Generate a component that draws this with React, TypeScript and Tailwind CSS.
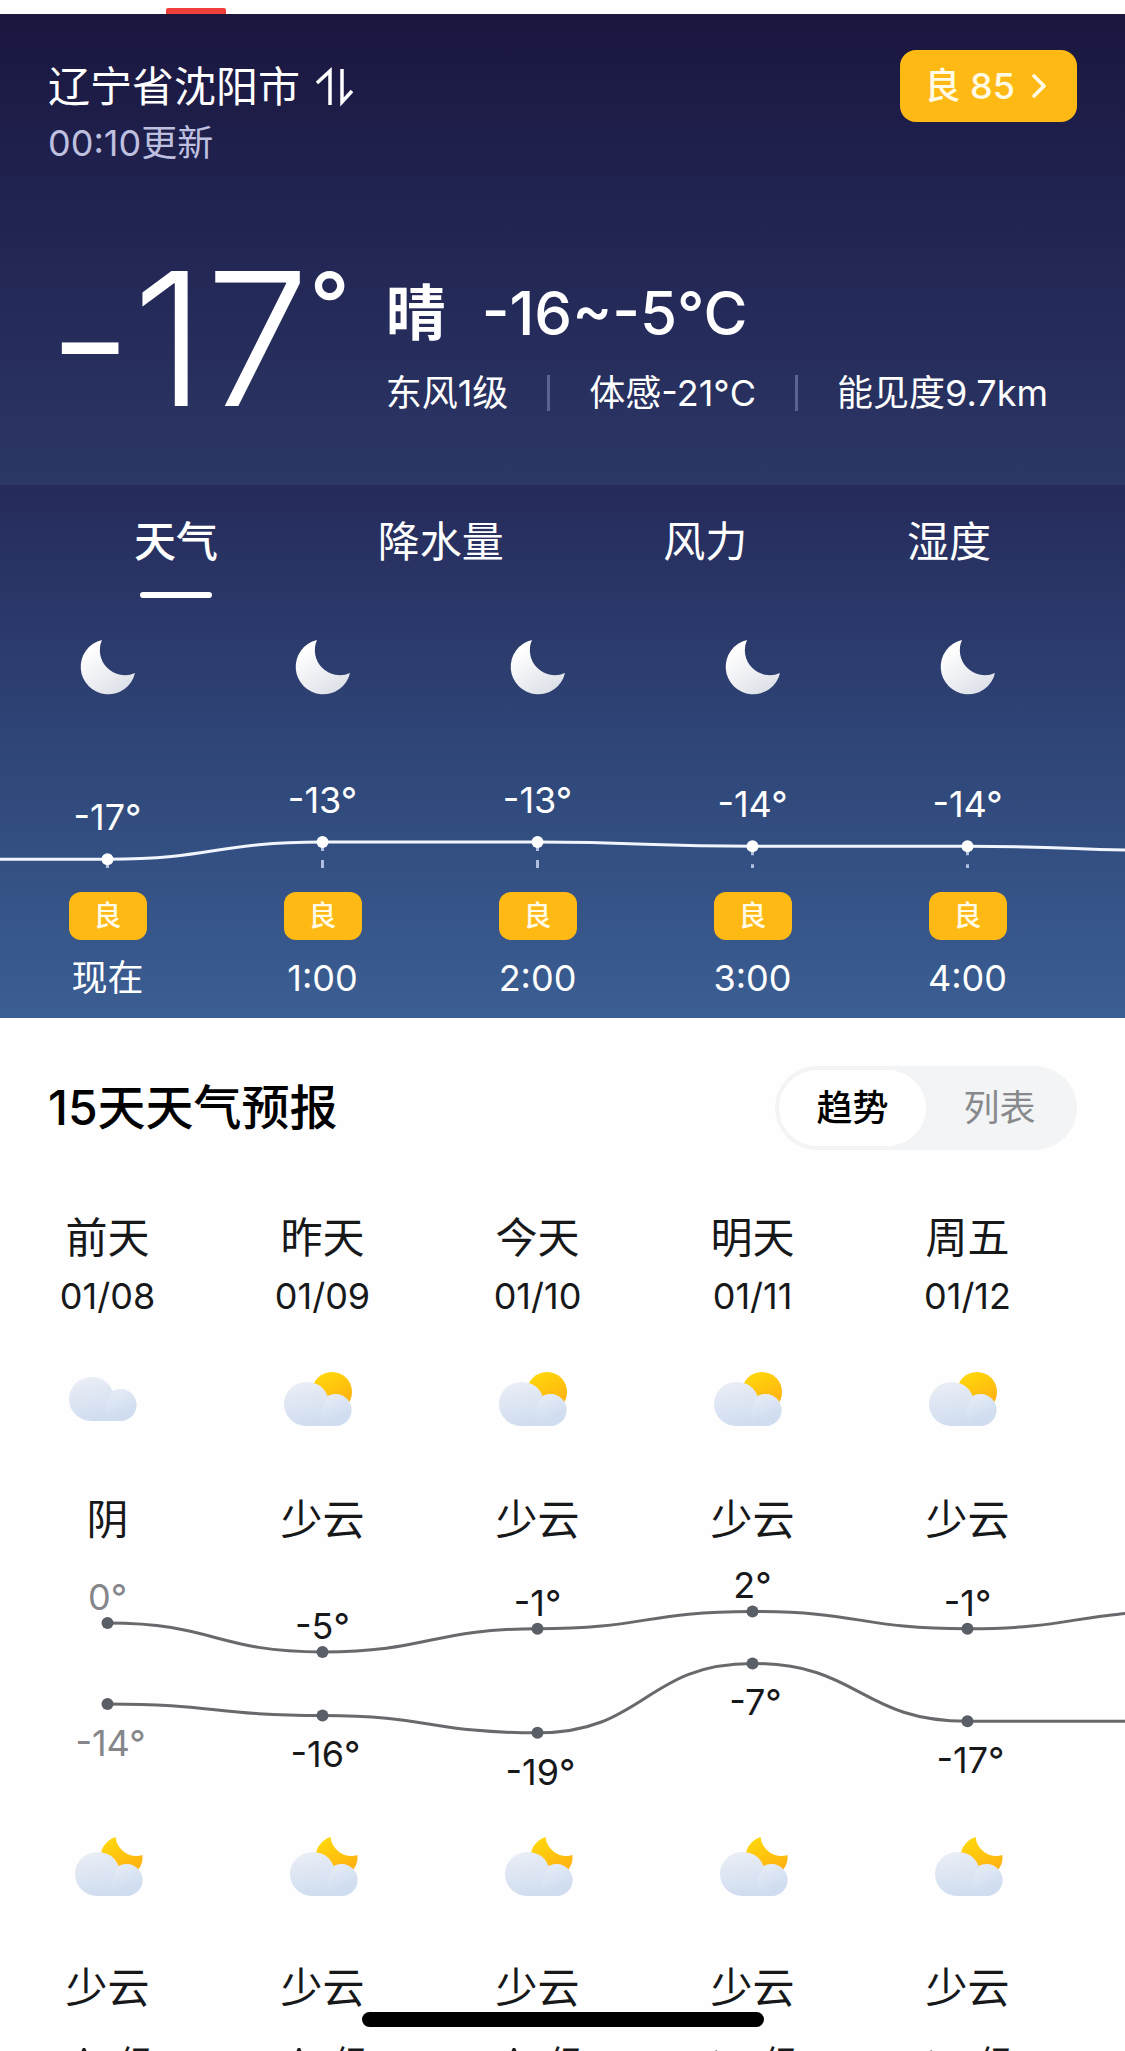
/**
 * Weather Page
 * Current conditions, hourly trend and the 15 day forecast
 */
import React, { useState } from 'react';
import { ChevronRight } from 'lucide-react';

type Icon = 'cloudy' | 'partly' | 'night';

const COL = 215;

const TABS = ['天气', '降水量', '风力', '湿度'];
const MODES = ['趋势', '列表'];

const HOURS = [
  { time: '现在', temp: -17 },
  { time: '1:00', temp: -13 },
  { time: '2:00', temp: -13 },
  { time: '3:00', temp: -14 },
  { time: '4:00', temp: -14 },
];

const DAYS: { name: string; date: string; icon: Icon; text: string; night: string; high: number; low: number; wind: number }[] = [
  { name: '前天', date: '01/08', icon: 'cloudy', text: '阴', night: '少云', high: 0, low: -14, wind: 0 },
  { name: '昨天', date: '01/09', icon: 'partly', text: '少云', night: '少云', high: -5, low: -16, wind: 0 },
  { name: '今天', date: '01/10', icon: 'partly', text: '少云', night: '少云', high: -1, low: -19, wind: 0 },
  { name: '明天', date: '01/11', icon: 'partly', text: '少云', night: '少云', high: 2, low: -7, wind: 90 },
  { name: '周五', date: '01/12', icon: 'partly', text: '少云', night: '少云', high: -1, low: -17, wind: 90 },
];

// Values of the next column, only used to carry the lines off the edge
const NEXT_HOUR = -15;
const NEXT_HIGH = 2;
const NEXT_LOW = -17;

const centerX = (i: number) => COL * i + COL / 2;
const hourY = (temp: number) => 148 + (-13 - temp) * 4.3;
const dayY = (temp: number) => 79 - temp * 5.78;

// Smooth line with a flat tangent at every point
const smoothPath = (ys: number[]) =>
  ys
    .map((y, i) => {
      if (i === 0) return `M${centerX(0)} ${y}`;
      const mid = COL * i;
      return `C${mid} ${ys[i - 1]} ${mid} ${y} ${centerX(i)} ${y}`;
    })
    .join('');

const Gradients: React.FC = () => (
  <svg className="absolute h-0 w-0" aria-hidden="true">
    <defs>
      <linearGradient id="moon" x1="0" y1="0" x2="0.7" y2="1">
        <stop offset="0.2" stopColor="#ffffff" />
        <stop offset="1" stopColor="#dde0e8" />
      </linearGradient>
      <linearGradient id="sun" x1="0.2" y1="0" x2="0.7" y2="1">
        <stop offset="0" stopColor="#ffd90a" />
        <stop offset="1" stopColor="#ffac12" />
      </linearGradient>
      <linearGradient id="cloud" x1="0" y1="0" x2="0.3" y2="1">
        <stop offset="0" stopColor="#eceff6" />
        <stop offset="1" stopColor="#d0ddf0" />
      </linearGradient>
      <linearGradient id="puff" x1="0" y1="0" x2="0.5" y2="1">
        <stop offset="0" stopColor="#f2f5fb" />
        <stop offset="0.8" stopColor="#d0ddf0" />
      </linearGradient>
    </defs>
  </svg>
);

const Cloud: React.FC<{ x: number; y: number }> = ({ x, y }) => (
  <g transform={`translate(${x} ${y})`}>
    <path d="M25 28A22 22 0 1 0 25 72H54.500A16 16 0 0 0 54.500 40Q50 40 46.500 42Q41 28 25 28Z" fill="url(#cloud)" />
    <path d="M46 72A16 16 0 0 1 43 50Q46 40 54.500 40A16 16 0 0 1 54.500 72Z" fill="url(#puff)" opacity="0.5" />
  </g>
);

const WeatherIcon: React.FC<{ icon: Icon }> = ({ icon }) => (
  <svg className="h-[84px] w-[84px]" viewBox="0 0 84 84" aria-hidden="true">
    {icon === 'partly' && <circle cx="51" cy="38" r="20" fill="url(#sun)" />}
    {icon === 'night' && <path d="M49.500 13A21 21 0 0 0 76.500 31A21 21 0 1 1 49.500 13Z" fill="url(#sun)" />}
    <Cloud x={icon === 'night' ? 6 : 0} y={icon === 'cloudy' ? -5 : 0} />
  </svg>
);

const Column: React.FC<{ children: React.ReactNode }> = ({ children }) => (
  <li className="flex w-[215px] shrink-0 flex-col items-center">{children}</li>
);

const HourlyChart: React.FC = () => {
  const ys = [...HOURS.map((h) => h.temp), NEXT_HOUR].map(hourY);
  return (
    <svg className="block h-[198px] w-[1290px] text-4xl" viewBox="0 0 1290 198">
      <path d={`M0 ${ys[0]}H${centerX(0)}${smoothPath(ys).replace('M', 'L')}`} fill="none" stroke="#f1f5fd" strokeWidth="3" />
      {HOURS.map((hour, i) => (
        <g key={hour.time}>
          <line x1={centerX(i)} x2={centerX(i)} y1={ys[i]} y2={174} stroke="#aebfdf" strokeWidth="3" strokeDasharray="9 9" />
          <circle cx={centerX(i)} cy={ys[i]} r="6" fill="#ffffff" />
          <text x={centerX(i)} y={ys[i] - 29} textAnchor="middle" fill="#ffffff">
            {hour.temp}°
          </text>
        </g>
      ))}
    </svg>
  );
};

const DailyChart: React.FC = () => {
  const highs = [...DAYS.map((d) => d.high), NEXT_HIGH].map(dayY);
  const lows = [...DAYS.map((d) => d.low), NEXT_LOW].map(dayY);
  return (
    <svg className="block h-[280px] w-[1290px] text-4xl" viewBox="0 0 1290 280">
      <path d={smoothPath(highs)} fill="none" stroke="#68696c" strokeWidth="3" />
      <path d={smoothPath(lows)} fill="none" stroke="#68696c" strokeWidth="3" />
      {DAYS.map((day, i) => (
        <g key={day.date} fill={i === 0 ? '#85868a' : '#17181a'} textAnchor="middle">
          <circle cx={centerX(i)} cy={highs[i]} r="6" fill="#5a5e66" />
          <circle cx={centerX(i)} cy={lows[i]} r="6" fill="#5a5e66" />
          <text x={centerX(i)} y={highs[i] - 13}>
            {day.high}°
          </text>
          <text x={centerX(i) + 3} y={lows[i] + 52}>
            {day.low}°
          </text>
        </g>
      ))}
    </svg>
  );
};

const App: React.FC = () => {
  const [tab, setTab] = useState('天气');
  const [mode, setMode] = useState('趋势');

  return (
    <div className="h-screen overflow-hidden bg-[#fefefe] font-['Inter','Noto_Sans_CJK_SC',sans-serif] text-4xl/[48px] text-[#17181a]">
      <Gradients />

      {/* Edge of the page above */}
      <div className="flex h-3.5 items-end px-[166px]">
        <div className="h-1.5 w-[60px] rounded-t-xs bg-[#f0403c]" />
      </div>

      {/* Current conditions */}
      <header className="bg-linear-to-b from-[#1a173f] via-[#222655] to-[#2c3765] px-12 pt-9 pb-[54px] text-white">
        <div className="flex items-start justify-between">
          <div className="pt-[13px]">
            <button type="button" className="flex items-center gap-4 text-[42px]/[48px]">
              辽宁省沈阳市
              <svg className="h-10 w-[38px]" viewBox="0 0 38 40" fill="none" stroke="currentColor" strokeWidth="3.500" aria-hidden="true">
                <path d="M1 16L14 4V38" />
                <path d="M26 2V35L36 24" />
              </svg>
            </button>
            <p className="mt-2 text-[#bfc0e0]">00:10更新</p>
          </div>
          <button type="button" className="flex h-[72px] items-center rounded-2xl bg-[#ffb914] pr-[18px] pl-6 font-medium text-[#fffbe6]">
            <span>良 85</span>
            <ChevronRight className="ml-1 h-10 w-10" strokeWidth={2.2} />
          </button>
        </div>

        <div className="mt-20 flex items-start gap-9">
          <h1 className="flex items-start text-[186px]/[184px] font-light [font-variant-ligatures:no-contextual]">
            -17<span className="text-[88px]/[112px] font-medium">°</span>
          </h1>
          <div className="pt-[30px]">
            <p className="flex gap-9 text-6xl/[72px] font-medium">
              <span className="font-bold">晴</span>
              <span>-16~-5°C</span>
            </p>
            <ul className="mt-5 flex items-center gap-[39px] whitespace-nowrap">
              <li>东风1级</li>
              <li className="h-9 w-[3px] bg-[#5d6390]" aria-hidden="true" />
              <li>体感-21°C</li>
              <li className="h-9 w-[3px] bg-[#5d6390]" aria-hidden="true" />
              <li>能见度9.7km</li>
            </ul>
          </div>
        </div>
      </header>

      {/* Hourly trend */}
      <section className="overflow-hidden bg-linear-to-b from-[#252b5b] via-[#2f4678] to-[#3b5e93] pt-[33px] pb-4 text-white">
        <nav className="flex h-20 items-start justify-between px-[134px] text-[42px]/[48px]">
          {TABS.map((name) => (
            <button
              key={name}
              type="button"
              onClick={() => setTab(name)}
              className={tab === name ? 'flex flex-col items-center font-medium' : ''}
            >
              {name}
              {tab === name && <span className="mt-[26px] h-1.5 w-[72px] rounded-full bg-white" />}
            </button>
          ))}
        </nav>

        <ul className="mt-[42px] flex">
          {HOURS.map((hour) => (
            <Column key={hour.time}>
              <svg className="h-[54px] w-[54px] overflow-visible" viewBox="0 0 54 54" aria-hidden="true">
                <path d="M21 0A25 25 0 0 0 54 33A27.500 27.500 0 1 1 21 0Z" fill="url(#moon)" />
              </svg>
            </Column>
          ))}
        </ul>
        <HourlyChart />
        <ul className="flex">
          {HOURS.map((hour) => (
            <Column key={hour.time}>
              <span className="flex h-12 w-[78px] items-center justify-center rounded-xl bg-[#ffb914] text-[28px] font-medium text-[#fffbe6]">
                良
              </span>
              <span className="mt-3.5">{hour.time}</span>
            </Column>
          ))}
        </ul>
      </section>

      {/* 15 day forecast */}
      <section className="overflow-hidden pt-12">
        <div className="flex items-center justify-between px-12">
          <h2 className="text-5xl font-medium text-black">15天天气预报</h2>
          <div className="flex rounded-full bg-[#f3f4f6] p-1">
            {MODES.map((name) => (
              <button
                key={name}
                type="button"
                onClick={() => setMode(name)}
                className={
                  mode === name
                    ? 'h-[76px] w-[147px] rounded-full bg-white font-medium text-black'
                    : 'h-[76px] w-[147px] rounded-full text-[#88898c]'
                }
              >
                {name}
              </button>
            ))}
          </div>
        </div>

        <ul className="mt-16 flex">
          {DAYS.map((day) => (
            <Column key={day.date}>
              <span className="text-[42px]/[48px]">{day.name}</span>
              <span className="mt-2.5 mb-[34px]">{day.date}</span>
              <WeatherIcon icon={day.icon} />
              <span className="mt-[58px] text-[42px]/[48px]">{day.text}</span>
            </Column>
          ))}
        </ul>
        <DailyChart />
        <ul className="flex">
          {DAYS.map((day) => (
            <Column key={day.date}>
              <WeatherIcon icon="night" />
              <span className="mt-14 text-[42px]/[48px]">{day.night}</span>
              <span className="mt-7 flex items-center gap-1 pl-2">
                <svg className="h-8 w-8" viewBox="0 0 32 32" fill="none" stroke="currentColor" strokeWidth="3" aria-hidden="true">
                  <path d="M16 1L28 29L16 23L4 29Z" strokeLinejoin="round" transform={`rotate(${day.wind} 16 16)`} />
                </svg>
                1级
              </span>
            </Column>
          ))}
        </ul>
      </section>

      {/* Home indicator */}
      <div className="fixed bottom-6 left-1/2 h-[15px] w-[402px] -translate-x-1/2 rounded-full bg-black" />
    </div>
  );
};

export default App;
